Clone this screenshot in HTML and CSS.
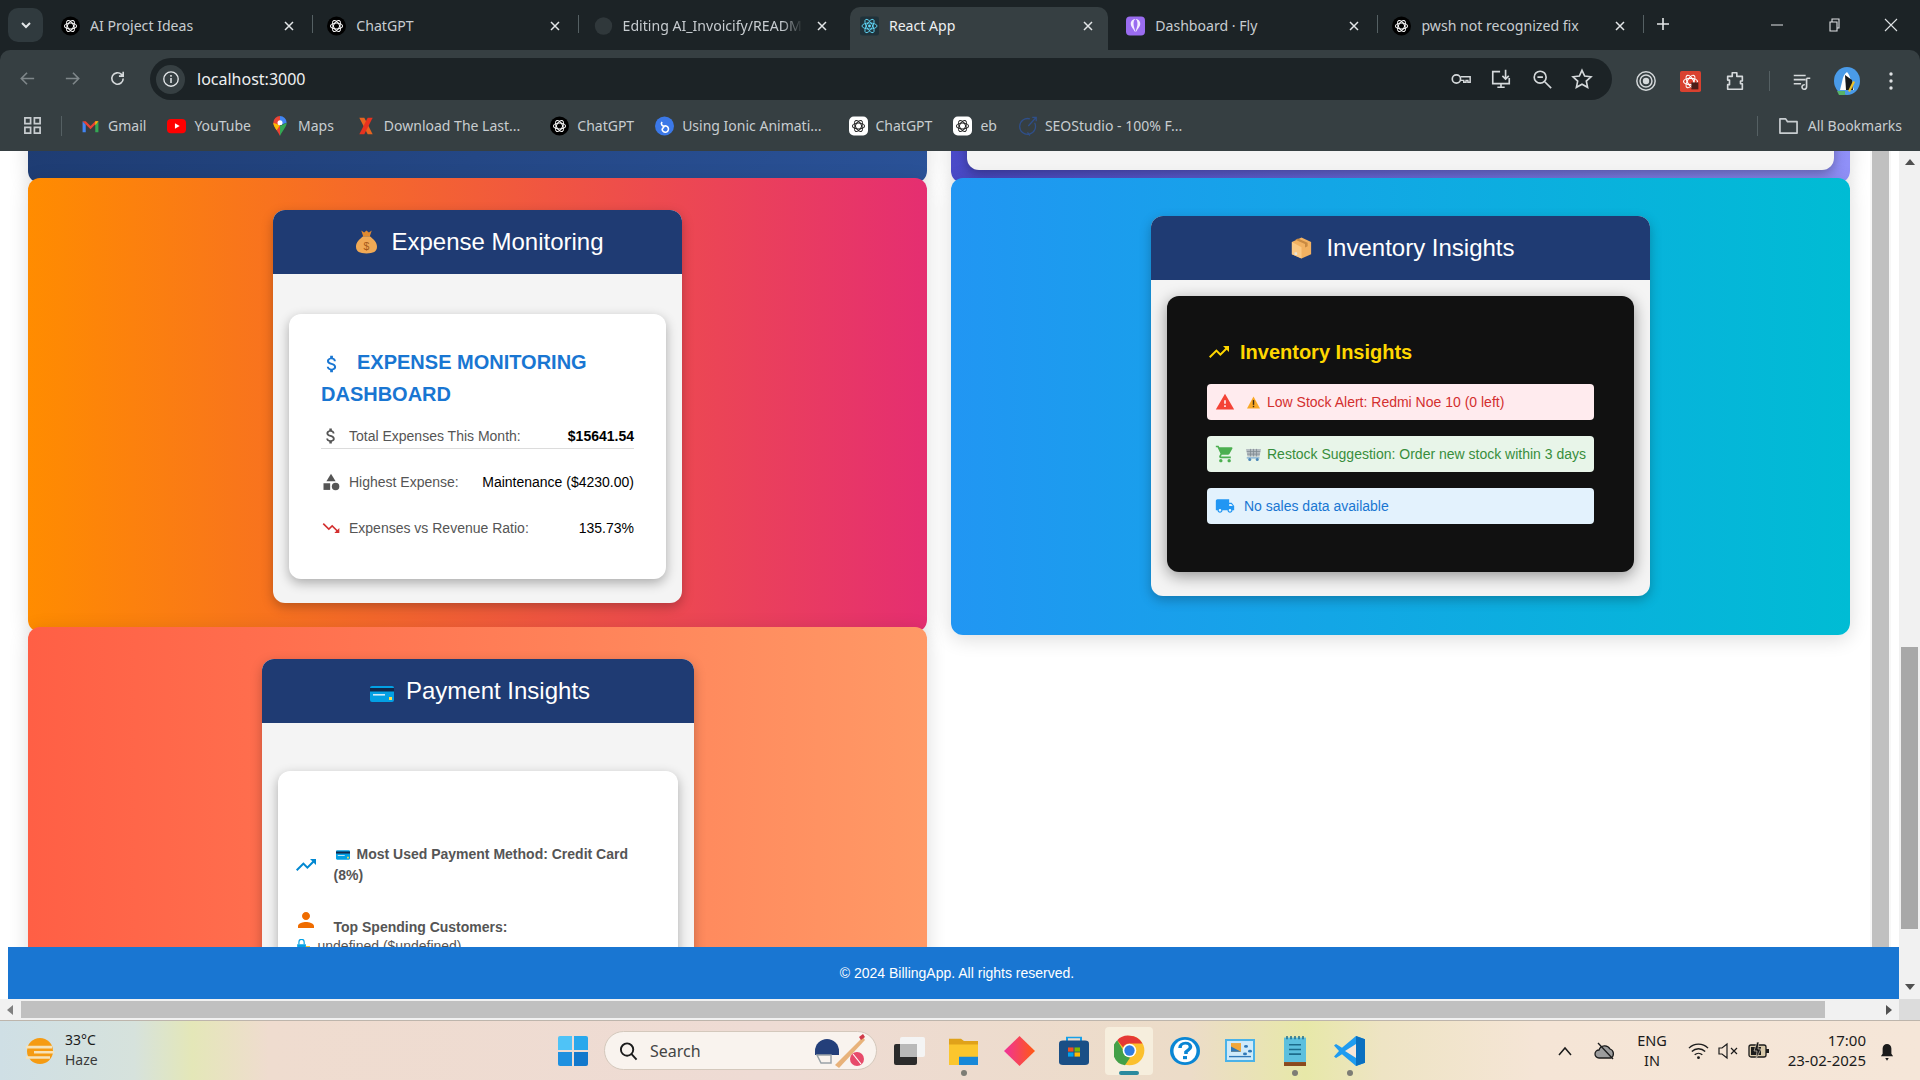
FILE: index.html
```html
<!DOCTYPE html>
<html lang="en">
<head>
<meta charset="utf-8">
<title>React App</title>
<link rel="stylesheet" href="styles.css">
</head>
<body>
<svg class="defs" aria-hidden="true">
  <symbol id="gpt" viewBox="0 0 24 24"><circle cx="12" cy="12" r="12" fill="#000"/><g fill="none" stroke="#fff" stroke-width="1.3"><ellipse cx="12" cy="12" rx="7.6" ry="3.8"/><ellipse cx="12" cy="12" rx="7.6" ry="3.8" transform="rotate(60 12 12)"/><ellipse cx="12" cy="12" rx="7.6" ry="3.8" transform="rotate(120 12 12)"/></g></symbol>
  <symbol id="gptw" viewBox="0 0 24 24"><rect width="24" height="24" rx="6" fill="#fff"/><g fill="none" stroke="#222" stroke-width="1.3"><ellipse cx="12" cy="12" rx="7.6" ry="3.8"/><ellipse cx="12" cy="12" rx="7.6" ry="3.8" transform="rotate(60 12 12)"/><ellipse cx="12" cy="12" rx="7.6" ry="3.8" transform="rotate(120 12 12)"/></g></symbol>
  <symbol id="x" viewBox="0 0 12 12"><path d="M2 2l8 8M10 2l-8 8" stroke="currentColor" stroke-width="1.5" fill="none"/></symbol>
  <symbol id="up" viewBox="0 0 24 24"><path fill="currentColor" d="M16 6l2.29 2.29-4.88 4.88-4-4L2 16.59 3.41 18l6-6 4 4 6.3-6.29L22 12V6z"/></symbol>
  <symbol id="down" viewBox="0 0 24 24"><path fill="currentColor" d="M16 18l2.29-2.29-4.88-4.88-4 4L2 7.41 3.41 6l6 6 4-4 6.3 6.29L22 12v6z"/></symbol>
  <symbol id="money" viewBox="0 0 24 24"><path fill="currentColor" d="M11.8 10.9c-2.27-.59-3-1.2-3-2.15 0-1.09 1.01-1.85 2.7-1.85 1.78 0 2.44.85 2.5 2.1h2.21c-.07-1.72-1.12-3.3-3.21-3.81V3h-3v2.16c-1.94.42-3.5 1.68-3.5 3.61 0 2.31 1.91 3.46 4.7 4.13 2.5.6 3 1.48 3 2.41 0 .69-.49 1.79-2.7 1.79-2.06 0-2.87-.92-2.98-2.1h-2.2c.12 2.19 1.76 3.42 3.68 3.83V21h3v-2.15c1.95-.37 3.5-1.5 3.5-3.55 0-2.84-2.43-3.81-4.7-4.4z"/></symbol>
  <symbol id="cat" viewBox="0 0 24 24"><path fill="currentColor" d="M12 2l-5.5 9h11z"/><circle fill="currentColor" cx="17.5" cy="17.5" r="4.5"/><path fill="currentColor" d="M3 13.5h8v8H3z"/></symbol>
  <symbol id="warn" viewBox="0 0 24 24"><path fill="currentColor" d="M1 21h22L12 2 1 21zm12-3h-2v-2h2v2zm0-4h-2v-4h2v4z"/></symbol>
  <symbol id="cart" viewBox="0 0 24 24"><path fill="currentColor" d="M7 18c-1.1 0-1.99.9-1.99 2S5.9 22 7 22s2-.9 2-2-.9-2-2-2zM1 2v2h2l3.6 7.59-1.35 2.45c-.16.28-.25.61-.25.96 0 1.1.9 2 2 2h12v-2H7.42c-.14 0-.25-.11-.25-.25l.03-.12.9-1.63h7.45c.75 0 1.41-.41 1.75-1.03l3.58-6.49c.08-.14.12-.31.12-.48 0-.55-.45-1-1-1H5.21l-.94-2H1zm16 16c-1.1 0-1.99.9-1.99 2s.89 2 1.99 2 2-.9 2-2-.9-2-2-2z"/></symbol>
  <symbol id="truck" viewBox="0 0 24 24"><path fill="currentColor" d="M20 8h-3V4H3c-1.1 0-2 .9-2 2v11h2c0 1.66 1.34 3 3 3s3-1.34 3-3h6c0 1.66 1.34 3 3 3s3-1.34 3-3h2v-5l-3-4zM6 18.5c-.83 0-1.5-.67-1.5-1.5s.67-1.5 1.5-1.5 1.5.67 1.5 1.5-.67 1.5-1.5 1.5zm13.5-9l1.96 2.5H17V9.5h2.5zm-1.5 9c-.83 0-1.5-.67-1.5-1.5s.67-1.5 1.5-1.5 1.5.67 1.5 1.5-.67 1.5-1.5 1.5z"/></symbol>
  <symbol id="person" viewBox="0 0 24 24"><path fill="currentColor" d="M12 12c2.21 0 4-1.79 4-4s-1.79-4-4-4-4 1.79-4 4 1.79 4 4 4zm0 2c-2.67 0-8 1.34-8 4v2h16v-2c0-2.66-5.33-4-8-4z"/></symbol>
  <symbol id="card" viewBox="0 0 24 16"><rect width="24" height="16" rx="2" fill="#03a0e4"/><rect y="2" width="24" height="3.500" fill="#12284a"/><rect x="3" y="8" width="12" height="1.600" fill="#cfe9f7"/><rect x="19" y="11" width="3" height="3" fill="#ffe04a"/></symbol>
  <symbol id="bag" viewBox="0 0 22 24"><path fill="#f0a955" d="M7.500 6C4 9 0 12 0 17c0 5 4 7 11 7s11-2 11-7c0-5-4-8-7.500-11z"/><path fill="#e08a30" d="M5.500 0l3 2 2.500-2 2.500 2 3-2-2 6h-7z"/><text x="11" y="20" font-size="11" text-anchor="middle" fill="#a5591a" font-family="Liberation Sans">$</text></symbol>
  <symbol id="box" viewBox="0 0 24 26"><path fill="#f2b161" d="M12 1l11 5v14l-11 5-11-5V6z"/><path fill="#fbc883" d="M12 12v13L1 20V6z"/><path fill="#c98a42" d="M5 3.500l11 5v4l3-1.400V7L8 2z"/><rect x="4" y="18" width="3" height="3" fill="#e9e4da"/></symbol>
  <symbol id="tri" viewBox="0 0 24 22"><path fill="#f9a825" d="M12 1l11 20H1z"/><rect x="10.800" y="7" width="2.400" height="8" fill="#3a2a10"/><rect x="10.800" y="16.500" width="2.400" height="2.500" fill="#3a2a10"/></symbol>
  <symbol id="ecart" viewBox="0 0 20 17"><path fill="#b4bcc1" d="M0 1h20l-2 10H2z"/><path stroke="#7f8a90" stroke-width="1" d="M1 4.500h18M1.500 8h17M6 1v10M10 1v10M14 1v10" fill="none"/><path fill="#8fb5d3" d="M1 12h17v2H1z"/><circle cx="5" cy="15" r="2" fill="#4b87b8"/><circle cx="15" cy="15" r="2" fill="#4b87b8"/></symbol>
  <symbol id="shopbag" viewBox="0 0 24 24"><path fill="#03a0e4" d="M2 9h15v15H2z"/><path d="M5 9V5a4.500 4.500 0 0 1 9 0v4" fill="none" stroke="#03a0e4" stroke-width="2"/><path fill="#fbc02d" d="M17 12h7v4h-7z"/></symbol>
  <symbol id="chrome" viewBox="0 0 48 48"><circle cx="24" cy="24" r="23" fill="#fbc02d"/><path fill="#e53935" d="M24 1a23 23 0 0 1 20 12H24a11 11 0 0 0-10 6L5 8A23 23 0 0 1 24 1z"/><path fill="#43a047" d="M5 8l10 17a11 11 0 0 0 10 10l-8 12A23 23 0 0 1 5 8z"/><circle cx="24" cy="24" r="10.500" fill="#fff"/><circle cx="24" cy="24" r="8" fill="#2f7de1"/></symbol>
</svg>

<header class="tabstrip">
  <button class="tablist" aria-label="Tab list"><svg class="ic12" viewBox="0 0 12 12"><path d="M2 4l4 4 4-4" fill="none" stroke="#e3e6e8" stroke-width="2"/></svg></button>
  <div class="tabs">
    <div class="tab"><svg class="fav"><use href="#gpt"/></svg><span class="tab-title">AI Project Ideas</span><svg class="close"><use href="#x"/></svg><i class="tab-sep"></i></div>
    <div class="tab"><svg class="fav"><use href="#gpt"/></svg><span class="tab-title">ChatGPT</span><svg class="close"><use href="#x"/></svg><i class="tab-sep"></i></div>
    <div class="tab"><svg class="fav" viewBox="0 0 24 24"><circle cx="12" cy="12" r="11" fill="#30383b"/></svg><span class="tab-title fade">Editing AI_Invoicify/README.md</span><svg class="close"><use href="#x"/></svg></div>
    <div class="tab active"><svg class="fav" viewBox="0 0 24 24"><rect width="24" height="24" rx="3" fill="#20323a"/><g fill="none" stroke="#61dafb" stroke-width="1.1"><ellipse cx="12" cy="12" rx="9.500" ry="3.800"/><ellipse cx="12" cy="12" rx="9.500" ry="3.800" transform="rotate(60 12 12)"/><ellipse cx="12" cy="12" rx="9.500" ry="3.800" transform="rotate(120 12 12)"/></g><circle cx="12" cy="12" r="1.800" fill="#61dafb"/></svg><span class="tab-title">React App</span><svg class="close"><use href="#x"/></svg></div>
    <div class="tab"><svg class="fav" viewBox="0 0 24 24"><rect width="24" height="24" rx="5" fill="#9a6cf0"/><path d="M12 3c-4 0-6 3-6 6 0 4 4 7 5 10h2c1-3 5-6 5-10 0-3-2-6-6-6z" fill="#f3ecff"/><path d="M12 3c-1.500 0-2.500 3-2.500 6s1.500 7 2.500 10c1-3 2.500-7 2.500-10S13.500 3 12 3z" fill="#9a6cf0"/></svg><span class="tab-title">Dashboard · Fly</span><svg class="close"><use href="#x"/></svg><i class="tab-sep"></i></div>
    <div class="tab"><svg class="fav"><use href="#gpt"/></svg><span class="tab-title">pwsh not recognized fix</span><svg class="close"><use href="#x"/></svg><i class="tab-sep"></i></div>
  </div>
  <svg class="newtab" viewBox="0 0 14 14"><path d="M7 1v12M1 7h12" stroke="#e3e6e8" stroke-width="1.600"/></svg>
  <div class="winctl">
    <svg class="ic14" viewBox="0 0 14 14"><path d="M1 7h12" stroke="#dfe2e4" stroke-width="1"/></svg>
    <svg class="ic14" viewBox="0 0 14 14"><path d="M3 4h7v9H3zM5 4V1h7v9h-2" fill="none" stroke="#dfe2e4" stroke-width="1.100"/></svg>
    <svg class="ic14" viewBox="0 0 14 14"><path d="M1 1l12 12M13 1L1 13" stroke="#dfe2e4" stroke-width="1.100"/></svg>
  </div>
</header>

<nav class="toolbar">
  <svg class="nav dim" viewBox="0 0 20 20"><path d="M17 10H4M9.500 4L3.500 10l6 6" fill="none" stroke="currentColor" stroke-width="1.700"/></svg>
  <svg class="nav dim" viewBox="0 0 20 20"><path d="M3 10h13M10.500 4l6 6-6 6" fill="none" stroke="currentColor" stroke-width="1.700"/></svg>
  <svg class="nav" viewBox="0 0 20 20"><path d="M16 10a6 6 0 1 1-1.800-4.300L16 7.500M16 3v4.500h-4.500" fill="none" stroke="currentColor" stroke-width="1.700"/></svg>
  <div class="omnibox">
    <span class="info"><svg class="ic18" viewBox="0 0 20 20"><circle cx="10" cy="10" r="8" fill="none" stroke="#e3e6e8" stroke-width="1.500"/><path d="M10 9v5.500M10 5.500v2" stroke="#e3e6e8" stroke-width="1.700"/></svg></span>
    <span class="url">localhost:3000</span>
    <span class="omni-right">
      <svg class="tool" viewBox="0 0 24 24"><circle cx="7" cy="12" r="4.500" fill="none" stroke="currentColor" stroke-width="1.800"/><path d="M11.500 9.500H22v6h-2.500v-2h-2v2H15v-2h-3.500" fill="none" stroke="currentColor" stroke-width="1.600"/></svg>
      <svg class="tool" viewBox="0 0 24 24"><path d="M11 4H3v13h18v-6M8 21h8M12 17v4" fill="none" stroke="currentColor" stroke-width="1.800"/><path d="M17 2v10M13.500 8.500L17 12l3.500-3.500" fill="none" stroke="currentColor" stroke-width="1.800"/></svg>
      <svg class="tool" viewBox="0 0 24 24"><circle cx="10" cy="10" r="6.500" fill="none" stroke="currentColor" stroke-width="1.800"/><path d="M15 15l7 7M7 10h6" stroke="currentColor" stroke-width="1.800"/></svg>
      <svg class="tool" viewBox="0 0 24 24"><path d="M12 2.500l2.900 6.300 6.900.8-5.100 4.700 1.400 6.800-6.100-3.400-6.100 3.400 1.400-6.800-5.100-4.700 6.900-.8z" fill="none" stroke="currentColor" stroke-width="1.800"/></svg>
    </span>
  </div>
  <div class="tool-right">
    <svg class="tool" viewBox="0 0 24 24"><circle cx="12" cy="12" r="10" fill="none" stroke="currentColor" stroke-width="1.600"/><circle cx="12" cy="12" r="6.500" fill="none" stroke="currentColor" stroke-width="1.600"/><circle cx="12" cy="12" r="3.500" fill="currentColor"/></svg>
    <svg class="tool ext" viewBox="0 0 24 24"><rect width="24" height="24" rx="2" fill="#d9412f"/><g fill="none" stroke="#fff" stroke-width="1.300"><ellipse cx="12" cy="12" rx="8" ry="3.500" transform="rotate(60 12 12)"/><ellipse cx="12" cy="12" rx="8" ry="3.500" transform="rotate(120 12 12)"/><ellipse cx="12" cy="12" rx="8" ry="3.500"/></g><path d="M13 13h8v8h-8z" fill="#4b1d18"/></svg>
    <svg class="tool" viewBox="0 0 24 24"><path d="M4 7h5V3h5v4h6v5h-2v3h2v6H4v-5h2v-5H4z" fill="none" stroke="currentColor" stroke-width="1.800" stroke-linejoin="round"/></svg>
    <i class="vsep"></i>
    <svg class="tool" viewBox="0 0 24 24"><path d="M3 6h13M3 10.500h13M3 15h8" stroke="currentColor" stroke-width="1.800"/><path d="M17 9v9.500a2.500 2.500 0 1 1-2-2.400M17 9h4" fill="none" stroke="currentColor" stroke-width="1.800"/></svg>
    <svg class="avatar" viewBox="0 0 26 28"><ellipse cx="13" cy="14" rx="13" ry="14" fill="#4a9be8"/><path d="M13 5c-3 2-4 5-5 10l-2 8h14l-3-9c-1-4-2-7-4-9z" fill="#fff"/><path d="M11 8l7 5 1 10h-7z" fill="#16191c"/><path d="M19 14L14 24l2 1 5-10z" fill="#ecc12b"/><path d="M3 24h8v4H5z" fill="#58b368"/></svg>
    <svg class="dots" viewBox="0 0 6 20"><circle cx="3" cy="3" r="1.700" fill="#dfe2e4"/><circle cx="3" cy="10" r="1.700" fill="#dfe2e4"/><circle cx="3" cy="17" r="1.700" fill="#dfe2e4"/></svg>
  </div>
</nav>

<div class="bookmarks">
  <svg class="apps" viewBox="0 0 20 20"><path d="M2 2h6v6H2zM12 2h6v6h-6zM2 12h6v6H2zM12 12h6v6h-6z" fill="none" stroke="#c8cdd0" stroke-width="1.800"/></svg>
  <i class="bm-sep"></i>
  <a class="bm"><svg class="fav" viewBox="0 0 24 24"><path d="M2 6v14h4V10z" fill="#4285f4"/><path d="M22 6v14h-4V10z" fill="#34a853"/><path d="M2 6l4 0 6 6 6-6h4l-10 10z" fill="#ea4335"/><path d="M18 6h4l-4 5z" fill="#fbbc04"/></svg>Gmail</a>
  <a class="bm"><svg class="fav" viewBox="0 0 24 24"><rect y="3" width="24" height="18" rx="5" fill="#f00"/><path d="M10 8.500v7l6-3.500z" fill="#fff"/></svg>YouTube</a>
  <a class="bm maps"><svg class="fav narrow" viewBox="0 0 16 24"><path d="M8 0a8 8 0 0 0-8 8c0 5 5 9 8 16z" fill="#ea4335"/><path d="M8 0a8 8 0 0 1 8 8L8 11z" fill="#4285f4"/><path d="M16 8c0 5-5 9-8 16V12z" fill="#34a853"/><path d="M0 8c0 3 2 6 4 9l4-6z" fill="#fbbc04"/><circle cx="8" cy="8" r="3" fill="#fff"/></svg>Maps</a>
  <a class="bm long dl"><svg class="fav narrow" viewBox="0 0 16 24"><path d="M0 2h6l10 20h-6z" fill="#e8641f"/><path d="M16 2h-6L0 22h6z" fill="#e8321f"/></svg>Download The Last...</a>
  <a class="bm"><svg class="fav"><use href="#gpt"/></svg>ChatGPT</a>
  <a class="bm long"><svg class="fav" viewBox="0 0 24 24"><circle cx="12" cy="12" r="12" fill="#3b78e7"/><path d="M9 7a3 3 0 0 0 3 5 4 4 0 1 1-3 4l3-4" fill="none" stroke="#fff" stroke-width="2"/></svg>Using Ionic Animati...</a>
  <a class="bm"><svg class="fav"><use href="#gptw"/></svg>ChatGPT</a>
  <a class="bm"><svg class="fav"><use href="#gptw"/></svg>eb</a>
  <a class="bm"><svg class="fav" viewBox="0 0 24 24"><path d="M21 8a10 10 0 1 1-6-5M13 12L23 1M18 1h5v5M12 20l3 4" fill="none" stroke="#2f4f8a" stroke-width="1.600"/></svg>SEOStudio - 100% F...</a>
  <span class="bm-end"><i class="bm-sep"></i><svg class="folder" viewBox="0 0 22 20"><path d="M2 3h6l2 3h10v12H2z" fill="none" stroke="#c8cdd0" stroke-width="1.800" stroke-linejoin="round"/></svg>All Bookmarks</span>
</div>

<div class="browser-page">
  <div class="doc">
    <div class="viewport">
      <main class="grid">
        <div class="tile tile-navy"></div>
        <div class="tile tile-purple"><div class="stub"></div></div>
        <section class="tile tile-orange">
          <div class="panel panel-expense">
            <h2 class="panel-head"><svg class="head-ic"><use href="#bag"/></svg>Expense Monitoring</h2>
            <div class="panel-body">
              <div class="wcard exp-card">
                <h3 class="exp-title"><svg class="exp-ic"><use href="#money"/></svg>EXPENSE MONITORING DASHBOARD</h3>
                <div class="exp-row first"><svg class="row-ic c-grey"><use href="#money"/></svg><span class="lbl">Total Expenses This Month:</span><b class="val">$15641.54</b></div>
                <div class="exp-row"><svg class="row-ic c-grey"><use href="#cat"/></svg><span class="lbl">Highest Expense:</span><span class="val">Maintenance ($4230.00)</span></div>
                <div class="exp-row"><svg class="row-ic c-red"><use href="#down"/></svg><span class="lbl">Expenses vs Revenue Ratio:</span><span class="val">135.73%</span></div>
              </div>
            </div>
          </div>
        </section>
        <section class="tile tile-blue">
          <div class="panel panel-inv">
            <h2 class="panel-head"><svg class="head-ic"><use href="#box"/></svg>Inventory Insights</h2>
            <div class="panel-body">
              <div class="blackcard">
                <h3 class="inv-title"><svg class="inv-ic"><use href="#up"/></svg>Inventory Insights</h3>
                <div class="alert a-red"><svg class="al-ic"><use href="#warn"/></svg><span class="al-msg"><svg class="al-emo"><use href="#tri"/></svg>Low Stock Alert: Redmi Noe 10 (0 left)</span></div>
                <div class="alert a-green"><svg class="al-ic"><use href="#cart"/></svg><span class="al-msg"><svg class="al-emo"><use href="#ecart"/></svg>Restock Suggestion: Order new stock within 3 days</span></div>
                <div class="alert a-blue"><svg class="al-ic"><use href="#truck"/></svg><span class="al-msg plain">No sales data available</span></div>
              </div>
            </div>
          </div>
        </section>
        <section class="tile tile-peach">
          <div class="panel panel-pay">
            <h2 class="panel-head"><svg class="head-ic wide"><use href="#card"/></svg>Payment Insights</h2>
            <div class="panel-body">
              <div class="wcard pay-card">
                <div class="pay-row"><svg class="pay-ic c-blue"><use href="#up"/></svg><p class="pay-text"><svg class="pay-emo"><use href="#card"/></svg>Most Used Payment Method: Credit Card (8%)</p></div>
                <div class="pay-row second"><svg class="pay-ic c-orange"><use href="#person"/></svg><p class="pay-text">Top Spending Customers:</p></div>
                <div class="pay-sub"><svg class="sub-ic"><use href="#shopbag"/></svg>undefined ($undefined)</div>
              </div>
            </div>
          </div>
        </section>
      </main>
      <div class="inner-scroll"><div class="inner-thumb"></div></div>
    </div>
    <footer class="footer">© 2024 BillingApp. All rights reserved.</footer>
  </div>
  <div class="vscroll">
    <svg class="arrow" viewBox="0 0 10 6"><path d="M5 0l5 6H0z" fill="#505050"/></svg>
    <div class="vthumb"></div>
    <svg class="arrow" viewBox="0 0 10 6"><path d="M5 6l5-6H0z" fill="#505050"/></svg>
  </div>
</div>
<div class="hscroll">
  <svg class="arrow-h" viewBox="0 0 6 10"><path d="M0 5l6-5v10z" fill="#808080"/></svg>
  <div class="hthumb"></div>
  <svg class="arrow-h" viewBox="0 0 6 10"><path d="M6 5L0 0v10z" fill="#505050"/></svg>
  <div class="corner"></div>
</div>

<footer class="taskbar">
  <div class="weather">
    <svg class="w-ic" viewBox="0 0 28 30" preserveAspectRatio="none"><ellipse cx="14" cy="15" rx="13" ry="15" fill="#f59b12"/><path d="M0 9h26v3H0zM8 15h20v3H8zM0 21h24v3H0z" fill="#f6e2b8"/></svg>
    <div class="w-text"><span>33°C</span><span class="haze">Haze</span></div>
  </div>
  <svg class="t-win" viewBox="0 0 30 30"><path d="M0 2a2 2 0 0 1 2-2h12v14H0z" fill="#4fc3f7"/><path d="M16 0h12a2 2 0 0 1 2 2v12H16z" fill="#29a8ec"/><path d="M0 16h14v14H2a2 2 0 0 1-2-2z" fill="#1e90e0"/><path d="M16 16h14v12a2 2 0 0 1-2 2H16z" fill="#1278cc"/></svg>
  <div class="t-search">
    <svg class="s-ic" viewBox="0 0 20 20"><circle cx="8.500" cy="8.500" r="6.500" fill="none" stroke="#1b1b1b" stroke-width="2"/><path d="M13 13l5.500 6" stroke="#1b1b1b" stroke-width="2"/></svg>
    <span class="s-label">Search</span>
    <svg class="s-art" viewBox="0 0 52 36"><path d="M2 18a12 12 0 0 1 24 0v4H2z" fill="#243f7a"/><path d="M4 22h14v8H8z" fill="none" stroke="#9aa3a8" stroke-width="1.500"/><path d="M50 4L22 32l4 3 26-28z" fill="#e8b27a"/><path d="M46 4l4-3 2 3-4 3z" fill="#d13a4a"/><circle cx="44" cy="26" r="7" fill="#e74a6a"/><path d="M40 21l8 10" stroke="#fff" stroke-width="1.200"/></svg>
  </div>
  <svg class="t-task" viewBox="0 0 31 28"><rect x="0" y="7" width="23" height="21" rx="2" fill="#2b2b2b"/><rect x="6" y="0" width="25" height="20" rx="2" fill="#f4f4f4"/><rect x="6" y="7" width="17" height="13" fill="#b9b9b9"/></svg>
  <div class="t-item t-exp"><svg class="fill-svg" viewBox="0 0 29 34" preserveAspectRatio="none"><path d="M0 2h12l3 3h14v8H0z" fill="#e0a21a"/><path d="M0 9h29v23a2 2 0 0 1-2 2H0z" fill="#fbc62d"/><path d="M10 24h19v10H10z" fill="#1788d8"/></svg><i class="dot"></i></div>
  <svg class="t-diamond" viewBox="0 0 31 36" preserveAspectRatio="none"><defs><linearGradient id="dg" x1="0" x2="1"><stop offset="0" stop-color="#f0329a"/><stop offset="1" stop-color="#ff5a12"/></linearGradient></defs><path d="M15.500 0L31 18 15.500 36 0 18z" fill="url(#dg)"/></svg>
  <svg class="t-store" viewBox="0 0 30 38" preserveAspectRatio="none"><path d="M8 8V2h14v6" fill="none" stroke="#18a0e8" stroke-width="2"/><rect y="6" width="30" height="32" rx="4" fill="#1a4f86"/><path d="M9 15h5.500v5.500H9z" fill="#f25022"/><path d="M15.500 15H21v5.500h-5.500z" fill="#7fba00"/><path d="M9 21.500h5.500V27H9z" fill="#00a4ef"/><path d="M15.500 21.500H21V27h-5.500z" fill="#ffb900"/></svg>
  <div class="t-item t-chrome"><svg class="chrome-ic"><use href="#chrome"/></svg><i class="bar"></i></div>
  <svg class="t-help" viewBox="0 0 30 36" preserveAspectRatio="none"><ellipse cx="15" cy="18" rx="15" ry="18" fill="#0a86d4"/><ellipse cx="15" cy="18" rx="11.500" ry="14.500" fill="#fff"/><path d="M10 14c0-4 2.500-6 5.500-6s5 2 5 5-3 4-4.500 6v3" fill="none" stroke="#0a86d4" stroke-width="3.600"/><rect x="13" y="24.500" width="4" height="4" fill="#0a86d4"/></svg>
  <svg class="t-app" viewBox="0 0 30 34" preserveAspectRatio="none"><rect width="30" height="34" fill="#4ab2e8"/><rect x="2" y="3" width="26" height="28" fill="#cfeafa"/><path d="M6 6h10v13H6z" fill="#f1a63a"/><path d="M6 19h10l-10-8z" fill="#2f78b8"/><circle cx="21" cy="11" r="2" fill="#2f78b8"/><circle cx="25" cy="18" r="2" fill="#2f78b8"/><circle cx="20" cy="22" r="2" fill="#2f78b8"/><path d="M4 26h22" stroke="#2f78b8" stroke-width="2"/></svg>
  <div class="t-item t-note"><svg class="fill-svg" viewBox="0 0 22 38" preserveAspectRatio="none"><rect y="2" width="22" height="31" fill="#5cc0de"/><rect y="33" width="22" height="5" fill="#8a4a1e"/><path d="M5 11h12M5 17h12M5 23h12" stroke="#1c6c8c" stroke-width="2"/><path d="M3 0v4M7 0v4M11 0v4M15 0v4M19 0v4" stroke="#1c6c8c" stroke-width="1.500"/></svg><i class="dot"></i></div>
  <div class="t-item t-code"><svg class="fill-svg" viewBox="0 0 31 38" preserveAspectRatio="none"><path d="M22 0l9 4v30l-9 4-14-15-6 5-2-2 5-7-5-7 2-2 6 5z" fill="#1f9cf0"/><path d="M22 10L11 19l11 9z" fill="#f6e6d8"/><path d="M22 0l9 4v30l-9 4z" fill="#0a70c0"/></svg><i class="dot"></i></div>
  <div class="tray">
    <svg class="tray-chev" viewBox="0 0 14 10"><path d="M1 9l6-7 6 7" fill="none" stroke="#1b1b1b" stroke-width="1.500"/></svg>
    <svg class="tray-cloud" viewBox="0 0 22 18"><path d="M5 16a4 4 0 0 1 0-8 6 6 0 0 1 11-1 5 5 0 0 1 1 9z" fill="#9c9c9c" stroke="#1b1b1b" stroke-width="1.300"/><path d="M4 1l15 16" stroke="#1b1b1b" stroke-width="1.300"/></svg>
    <div class="lang"><span>ENG</span><span>IN</span></div>
    <svg class="tray-wifi" viewBox="0 0 22 18"><path d="M1 6a14 14 0 0 1 20 0M4 9.500a10 10 0 0 1 14 0M7 13a6 6 0 0 1 8 0" fill="none" stroke="#1b1b1b" stroke-width="1.400"/><circle cx="11" cy="16" r="1.500" fill="#1b1b1b"/></svg>
    <svg class="tray-spk" viewBox="0 0 20 18"><path d="M1 6h3l5-4v14l-5-4H1z" fill="none" stroke="#1b1b1b" stroke-width="1.200"/><path d="M13 6l6 6M19 6l-6 6" stroke="#1b1b1b" stroke-width="1.200"/></svg>
    <svg class="tray-batt" viewBox="0 0 22 18"><rect x="1" y="3" width="17" height="12" rx="2" fill="#d8c8a8" stroke="#1b1b1b" stroke-width="1.300"/><rect x="18" y="7" width="3" height="4" fill="#1b1b1b"/><path d="M3 5h10v8H3z" fill="#1b1b1b"/><path d="M9 0L6 9h3l-1 8 5-10h-3l1-7z" fill="#1b1b1b" stroke="#f0e0cc" stroke-width=".6"/></svg>
    <div class="clock"><span>17:00</span><span>23-02-2025</span></div>
    <svg class="tray-bell" viewBox="0 0 16 22"><path d="M8 3a5 5 0 0 0-5 5v6l-2 3h14l-2-3V8a5 5 0 0 0-5-5z" fill="#1b1b1b"/><path d="M6 19h4l-2 3z" fill="#1b1b1b"/></svg>
  </div>
</footer>
</body>
</html>
```

FILE: styles.css
```css
* { box-sizing: border-box; }
html, body { margin: 0; padding: 0; width: 1920px; height: 1080px; overflow: hidden; background: #1c2326; font-family: "Liberation Sans", Arial, sans-serif; }
.defs { position: absolute; width: 0; height: 0; }
h2, h3, p { margin: 0; }
i { display: block; }

/* ---------- browser chrome ---------- */
.tabstrip { height: 50px; background: #1c2326; display: flex; align-items: flex-end; position: relative; font-family: "Noto Sans", sans-serif; }
.tablist { position: absolute; left: 8px; top: 8px; width: 35px; height: 34px; border: 0; padding: 0; border-radius: 10px; background: #303a3e; display: flex; align-items: center; justify-content: center; }
.ic12 { width: 12px; height: 12px; }
.tabs { display: flex; margin-left: 51px; height: 43px; gap: 8.3px; }
.tab { width: 258px; height: 43px; display: flex; align-items: center; padding: 0 0 6px 10px; position: relative; color: #c7ccd0; font-size: 14.1px; }
.tab.active { background: #363f42; color: #eef0f1; border-radius: 10px 10px 0 0; }
.fav { width: 19px; height: 20px; flex: none; }
.fav.narrow { width: 16px; margin-right: 2px; }
.tab-title { margin-left: 10px; width: 193px; white-space: nowrap; overflow: hidden; }
.tab-title.fade { width: 180px; margin-right: 13px; -webkit-mask-image: linear-gradient(90deg, #000 88%, transparent); mask-image: linear-gradient(90deg, #000 88%, transparent); }
.close { width: 12px; height: 12px; margin-left: 0; flex: none; color: #e3e6e8; }
.tab-sep { position: absolute; right: -4px; top: 8px; width: 1px; height: 18px; background: #556063; }
.newtab { width: 14px; height: 14px; margin: 0 0 19px 16px; flex: none; }
.winctl { margin-left: auto; margin-right: 22px; height: 50px; display: flex; align-items: center; gap: 43px; }
.ic14 { width: 14px; height: 14px; }

.toolbar { height: 50px; background: #363f42; display: flex; align-items: flex-end; padding-left: 18px; border-radius: 10px 10px 0 0; position: relative; top: 0; }
.nav { width: 19px; height: 19px; margin: 0 26px 12px 0; color: #d5d9db; flex: none; }
.nav.dim { color: #7f878a; }
.omnibox { position: absolute; left: 150px; top: 8px; width: 1462px; height: 42px; border-radius: 21px; background: #1c2326; display: flex; align-items: center; padding-left: 6px; font-family: "Noto Sans", sans-serif; }
.info { width: 29px; height: 29px; border-radius: 50%; background: #363f42; display: flex; align-items: center; justify-content: center; flex: none; }
.ic18 { width: 18px; height: 18px; }
.url { margin-left: 12px; color: #eef0f1; font-size: 16px; }
.omni-right { margin-left: auto; margin-right: 19px; display: flex; gap: 18.4px; }
.tool { width: 22px; height: 22px; color: #d5d9db; flex: none; }
.tool-right { position: absolute; left: 1635px; top: 17px; width: 270px; display: flex; align-items: center; gap: 23px; }
.tool.ext { width: 21px; height: 23px; }
.vsep { width: 1px; height: 20px; background: #556063; margin: 0 -2px 0 0; }
.avatar { width: 26px; height: 28px; flex: none; margin-left: -2px; }
.dots { width: 6px; height: 20px; flex: none; margin-left: 5px; }

.bookmarks { height: 51px; background: #363f42; display: flex; align-items: center; padding-left: 23px; color: #c8cdd0; font: 14px "Noto Sans", sans-serif; }
.apps { width: 19px; height: 19px; flex: none; }
.bm-sep { width: 1px; height: 20px; background: #556063; flex: none; margin: 0 19px; }
.bm { display: flex; align-items: center; gap: 8px; margin-right: 21px; white-space: nowrap; }
.bm.maps { margin-right: 24px; }
.bm.long { margin-right: 27px; }
.bm.long.dl { margin-right: 30px; }
.bm-end { margin-left: auto; margin-right: 18px; display: flex; align-items: center; }
.bm-end .bm-sep { margin: 0 20px 0 0; }
.folder { width: 21px; height: 19px; margin-right: 9px; }

/* ---------- page ---------- */
.browser-page { height: 848px; display: flex; background: #fff; }
.doc { width: 1899px; display: flex; flex-direction: column; }
.viewport { height: 796px; overflow: hidden; display: flex; background: #fff; }
.grid { width: 1870px; padding-left: 28px; display: grid; grid-template-columns: 899px 899px; column-gap: 24px; grid-template-rows: 27px 449px 600px; flex: none; }
.tile { border-radius: 12px; box-shadow: 0 4px 20px rgba(0,0,0,.14); align-self: start; }
.tile-navy { height: 60px; margin-top: -28px; background: linear-gradient(135deg, #1e3c72, #2a5298); }
.tile-purple { height: 60px; margin-top: -28px; background: linear-gradient(90deg, #4a4ac8, #9090f8); padding: 0 16px; }
.stub { height: 47px; border-radius: 0 0 12px 12px; background: #f4f4f4; box-shadow: 0 4px 12px rgba(0,0,0,.3); }
.tile-orange { height: 454px; padding-top: 32px; background: linear-gradient(90deg, #ff8c00, #e52e71); }
.tile-blue { height: 457px; padding-top: 38px; background: linear-gradient(90deg, #2196f3, #00bcd4); }
.tile-peach { height: 600px; padding-top: 32px; background: linear-gradient(90deg, #ff5f45, #ff9966); }
.panel { margin: 0 auto; border-radius: 12px; background: #f4f4f4; box-shadow: 0 4px 12px rgba(0,0,0,.25); overflow: hidden; }
.panel-expense { width: 409px; height: 393px; }
.panel-inv { width: 499px; height: 380px; }
.panel-pay { width: 432px; height: 700px; }
.panel-head { height: 64px; padding-left: 5px; background: #1f3b73; color: #fff; font-size: 24px; font-weight: 400; display: flex; align-items: center; justify-content: center; gap: 14px; }
.head-ic { width: 21px; height: 24px; flex: none; }
.head-ic.wide { width: 24px; height: 16px; margin: 6px -2px 0 0; }
.panel-body { padding: 16px; }
.panel-expense .panel-body { padding-top: 40px; }
.wcard { background: #fff; border-radius: 12px; box-shadow: 0 4px 12px rgba(0,0,0,.3); padding: 32px; }
.exp-card { padding-bottom: 28px; }
.exp-title { color: #1976d2; font-size: 20px; line-height: 32px; font-weight: 700; }
.exp-ic { width: 22px; height: 22px; margin: 0 14px 0 0; vertical-align: -6px; color: #1976d2; }
.exp-row { height: 46px; display: flex; align-items: center; font-size: 14px; }
.exp-row.first { height: 25px; margin: 14px 0 10px; border-bottom: 1px solid #dcdcdc; padding-bottom: 1px; }
.row-ic { width: 20px; height: 20px; margin-right: 8px; flex: none; }
.c-grey { color: #555; }
.c-red { color: #d32f2f; }
.c-blue { color: #0288d1; }
.c-orange { color: #ef6c00; }
.lbl { color: #555; }
.val { margin-left: auto; color: #000; }

.blackcard { background: #111; border-radius: 12px; box-shadow: 0 4px 16px rgba(0,0,0,.4); padding: 40px; height: 276px; }
.inv-title { color: #ffd700; font-size: 20px; line-height: 32px; font-weight: 700; display: flex; align-items: center; gap: 9px; margin-bottom: 16px; }
.inv-ic { width: 24px; height: 24px; color: #ffd700; flex: none; }
.alert { height: 36px; border-radius: 4px; display: flex; align-items: center; padding-left: 8px; font-size: 14px; margin-bottom: 16px; white-space: nowrap; }
.a-red { background: #ffebee; color: #d32f2f; }
.a-green { background: #e8f5e9; color: #388e3c; }
.a-blue { background: #e3f2fd; color: #1976d2; }
.al-ic { width: 20px; height: 20px; flex: none; }
.a-red .al-ic { color: #f44336; }
.a-green .al-ic { color: #4caf50; }
.a-blue .al-ic { color: #2196f3; }
.al-msg { margin-left: 11px; display: flex; align-items: center; }
.al-msg.plain { margin-left: 9px; }
.al-emo { width: 15px; height: 13px; margin-right: 6px; flex: none; }

.pay-card { padding: 73px 16px 0 18px; margin-top: 32px; height: 400px; }
.pay-row { display: flex; align-items: center; }
.pay-row.second { margin-top: 23px; align-items: flex-start; }
.pay-ic { width: 24px; height: 24px; flex: none; margin: 0 16px 0 -2px; }
.pay-text { width: 315px; font-size: 14px; font-weight: 700; color: #555; line-height: 20.5px; }
.pay-row.second .pay-text { margin-top: 9px; }
.pay-emo { width: 14px; height: 10px; margin: 0 7px 0 2px; vertical-align: -1px; }
.pay-sub { display: flex; align-items: center; font-size: 14px; color: #555; line-height: 20px; margin-top: -1.5px; gap: 8px; }
.sub-ic { width: 14px; height: 14px; flex: none; }

.inner-scroll { width: 21px; margin-left: 0; flex: none; background: #f7f7f7; padding: 0 2px; }
.inner-thumb { height: 100%; background: #c0c0c0; }
.footer { height: 52px; margin-left: 8px; padding-left: 7px; background: #1976d2; color: #fff; font-size: 14px; display: flex; align-items: center; justify-content: center; }

.vscroll { width: 21px; background: #f1f1f1; position: relative; display: flex; flex-direction: column; align-items: center; }
.arrow { width: 10px; height: 6px; flex: none; }
.arrow:first-child { margin-top: 8px; }
.arrow:last-child { margin-top: 55px; }
.vthumb { width: 17px; height: 282px; margin-top: 482px; background: #a8a8a8; flex: none; }
.hscroll { height: 21px; background: #f1f1f1; display: flex; align-items: center; padding-left: 7px; }
.arrow-h { width: 6px; height: 10px; flex: none; }
.hthumb { width: 1804px; height: 17px; margin-left: 8px; background: #c0c0c0; flex: none; }
.hscroll .arrow-h:nth-child(3) { margin-left: 61px; }
.corner { width: 21px; height: 21px; margin-left: auto; background: #dcdcdc; }

/* ---------- taskbar ---------- */
.taskbar { height: 60px; border-top: 1px solid #bdb5ac; display: flex; align-items: center; font: 14px "Noto Sans", sans-serif; color: #1b1b1b; background: linear-gradient(90deg, #cfdfe5 0, #d6e2dc 7%, #e4e7b8 10%, #efdccf 14%, #eedbd4 40%, #ecdcc8 62%, #e7e8a8 68%, #eee4c4 72%, #f5e5d6 80%, #f5e6d8 100%); }
.weather { width: 558px; padding-left: 26px; display: flex; align-items: center; flex: none; }
.w-ic { width: 28px; height: 26px; }
.w-text { margin: -2px 0 0 11px; display: flex; flex-direction: column; font-size: 14px; line-height: 20px; }
.haze { color: #3a3a3a; }
.t-win { width: 30px; height: 30px; flex: none; }
.t-search { width: 273px; height: 39px; margin-left: 16px; border-radius: 20px; background: #f9f3ee; border: 1px solid #d4c8bc; display: flex; align-items: center; padding-left: 14px; flex: none; }
.s-ic { width: 19px; height: 20px; }
.s-label { margin-left: 12px; font-size: 16px; color: #444; }
.s-art { width: 52px; height: 36px; margin-left: auto; margin-right: 11px; }
.t-task { width: 31px; height: 28px; margin-left: 17px; flex: none; }
.t-item { position: relative; flex: none; }
.fill-svg { display: block; width: 100%; height: 100%; }
.t-exp { width: 29px; height: 28px; margin-left: 24px; }
.t-diamond { width: 31px; height: 30px; margin-left: 26px; flex: none; }
.t-store { width: 30px; height: 29px; margin-left: 24px; flex: none; }
.t-chrome { width: 48px; height: 48px; margin-left: 16px; background: #f6eedd; border-radius: 4px; display: flex; align-items: center; justify-content: center; }
.chrome-ic { width: 31px; height: 31px; }
.bar { position: absolute; left: 14px; bottom: 0; width: 20px; height: 4px; border-radius: 2px; background: #2b8a9e; }
.t-help { width: 30px; height: 28px; margin-left: 17px; flex: none; }
.t-app { width: 30px; height: 23px; margin-left: 25px; flex: none; }
.t-note { width: 22px; height: 30px; margin-left: 29px; }
.t-code { width: 31px; height: 30px; margin-left: 28px; }
.dot { position: absolute; left: 50%; bottom: -10px; width: 6px; height: 6px; margin-left: -3px; border-radius: 50%; background: #7d7d75; }
.t-exp .dot { bottom: -11px; }
.tray { margin-left: auto; display: flex; align-items: center; padding-right: 26px; height: 100%; }
.tray-chev { width: 14px; height: 10px; margin-right: 1px; }
.tray-cloud { width: 22px; height: 20px; margin-left: 21px; }
.lang { display: flex; flex-direction: column; align-items: center; line-height: 20px; font-size: 14.5px; width: 34px; margin: -2px 0 0 19px; }
.tray-wifi { width: 21px; height: 18px; margin-left: 19px; }
.tray-spk { width: 20px; height: 18px; margin-left: 9px; }
.tray-batt { width: 22px; height: 18px; margin-left: 10px; }
.clock { margin: -2px 0 0 17px; display: flex; flex-direction: column; align-items: flex-end; line-height: 20px; font-size: 15px; width: 79px; }
.tray-bell { width: 14px; height: 20px; margin-left: 14px; }
```
